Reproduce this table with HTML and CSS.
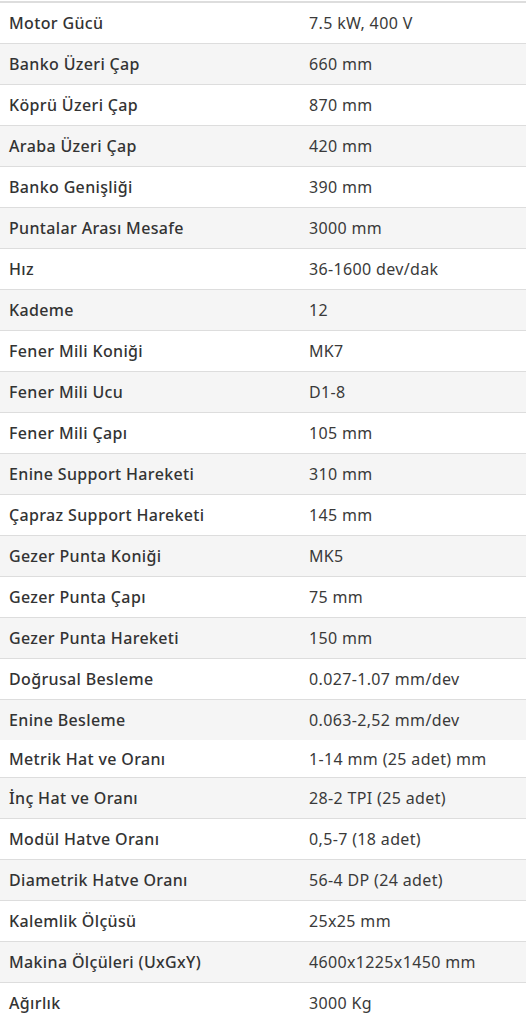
FILE: index.html
```html
<!DOCTYPE html>
<html lang="tr">
<head>
<meta charset="utf-8">
<link rel="stylesheet" href="styles.css">
</head>
<body>
<table class="specs">
<tbody>
<tr><td>Motor Gücü</td><td>7.5 kW, 400 V</td></tr>
<tr><td>Banko Üzeri Çap</td><td>660 mm</td></tr>
<tr><td>Köprü Üzeri Çap</td><td>870 mm</td></tr>
<tr><td>Araba Üzeri Çap</td><td>420 mm</td></tr>
<tr><td>Banko Genişliği</td><td>390 mm</td></tr>
<tr><td>Puntalar Arası Mesafe</td><td>3000 mm</td></tr>
<tr><td>Hız</td><td>36-1600 dev/dak</td></tr>
<tr><td>Kademe</td><td>12</td></tr>
<tr><td>Fener Mili Koniği</td><td>MK7</td></tr>
<tr><td>Fener Mili Ucu</td><td>D1-8</td></tr>
<tr><td>Fener Mili Çapı</td><td>105 mm</td></tr>
<tr><td>Enine Support Hareketi</td><td>310 mm</td></tr>
<tr><td>Çapraz Support Hareketi</td><td>145 mm</td></tr>
<tr><td>Gezer Punta Koniği</td><td>MK5</td></tr>
<tr><td>Gezer Punta Çapı</td><td>75 mm</td></tr>
<tr><td>Gezer Punta Hareketi</td><td>150 mm</td></tr>
<tr><td>Doğrusal Besleme</td><td>0.027-1.07 mm/dev</td></tr>
<tr><td>Enine Besleme</td><td>0.063-2,52 mm/dev</td></tr>
<tr class="tight"><td>Metrik Hat ve Oranı</td><td>1-14 mm (25 adet) mm</td></tr>
<tr><td>İnç Hat ve Oranı</td><td>28-2 TPI (25 adet)</td></tr>
<tr><td>Modül Hatve Oranı</td><td>0,5-7 (18 adet)</td></tr>
<tr><td>Diametrik Hatve Oranı</td><td>56-4 DP (24 adet)</td></tr>
<tr><td>Kalemlik Ölçüsü</td><td>25x25 mm</td></tr>
<tr><td>Makina Ölçüleri (UxGxY)</td><td>4600x1225x1450 mm</td></tr>
<tr><td>Ağırlık</td><td>3000 Kg</td></tr>
</tbody>
</table>
</body>
</html>
```
FILE: styles.css
```css
html, body {
  margin: 0;
  padding: 0;
  background: #fff;
}
body {
  padding-top: 1px;
  font-family: "Noto Sans", "Open Sans", sans-serif;
  font-size: 16px;
  color: #333;
}
.specs {
  width: 100%;
  border-collapse: collapse;
  border-top: 2px solid #ddd;
}
.specs td {
  height: 41px;
  padding: 1px 8px 0 9px;
  vertical-align: middle;
  border-top: 1px solid #ddd;
  box-sizing: border-box;
  line-height: 20px;
  letter-spacing: 0.35px;
  font-weight: 400;
  color: #3a3a3a;
}
.specs td:first-child {
  width: 300px;
  font-weight: 500;
  color: #333;
}
.specs tr:first-child td {
  border-top: 0;
}
.specs tr:nth-child(even) td {
  background: #f5f5f5;
}
.specs tr.tight td {
  border-top: 0;
  height: 37px;
}
```
